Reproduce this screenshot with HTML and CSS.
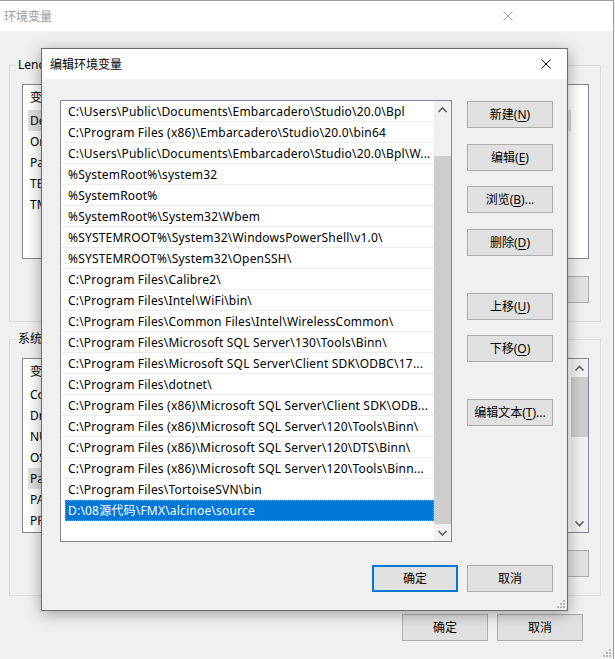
FILE: index.html
```html
<!DOCTYPE html>
<html lang="zh-CN">
<head>
<meta charset="utf-8">
<title>环境变量</title>
<link rel="stylesheet" href="styles.css">
</head>
<body>
<div class="win">
  <div class="win-title">
    <span class="win-title-text">环境变量</span>
    <svg class="win-close" width="10" height="10" viewBox="0 0 10 10"><path d="M0.5 0.5 L9.5 9.5 M9.5 0.5 L0.5 9.5" stroke="#9a9a9a" stroke-width="1" fill="none"/></svg>
  </div>
  <div class="win-body">
    <div class="group">
      <span class="group-label">Lenovo 的用户变量(<u>U</u>)</span>
      <div class="bg-list">
        <div class="bg-rows">
          <div class="bg-head">变量</div>
          <div class="bg-row hl">DevEco Studio</div>
          <div class="bg-row">OneDrive</div>
          <div class="bg-row">Path</div>
          <div class="bg-row">TEMP</div>
          <div class="bg-row">TMP</div>
        </div>
      </div>
      <div class="bg-btns">
        <button class="btn">新建(<u>N</u>)...</button>
        <button class="btn">编辑(<u>E</u>)...</button>
        <button class="btn">删除(<u>D</u>)</button>
      </div>
    </div>
    <div class="group">
      <span class="group-label">系统变量(<u>S</u>)</span>
      <div class="bg-list">
        <div class="bg-rows">
          <div class="bg-head">变量</div>
          <div class="bg-row">ComSpec</div>
          <div class="bg-row">DriverData</div>
          <div class="bg-row">NUMBER_OF_PROCESSORS</div>
          <div class="bg-row">OS</div>
          <div class="bg-row hl">Path</div>
          <div class="bg-row">PATHEXT</div>
          <div class="bg-row">PROCESSOR_ARCHITECTURE</div>
        </div>
        <div class="sbar bg-sbar">
          <svg class="arrow" width="17" height="17" viewBox="0 0 17 17"><polyline points="4.5,10.5 8.5,6.5 12.5,10.5" stroke="#606060" stroke-width="1.6" fill="none"/></svg>
          <div class="thumb bg-thumb"></div>
          <div class="track"></div>
          <svg class="arrow" width="17" height="17" viewBox="0 0 17 17"><polyline points="4.5,6.5 8.5,10.5 12.5,6.5" stroke="#606060" stroke-width="1.6" fill="none"/></svg>
        </div>
      </div>
      <div class="bg-btns">
        <button class="btn">新建(<u>W</u>)...</button>
        <button class="btn">编辑(<u>I</u>)...</button>
        <button class="btn">删除(<u>L</u>)</button>
      </div>
    </div>
    <div class="win-foot">
      <button class="btn">确定</button>
      <button class="btn">取消</button>
    </div>
  </div>
  <svg class="grip win-grip" width="8" height="8" viewBox="0 0 8 8"><rect x="6" y="0" width="2" height="2"/><rect x="6" y="3" width="2" height="2"/><rect x="3" y="3" width="2" height="2"/><rect x="6" y="6" width="2" height="2"/><rect x="3" y="6" width="2" height="2"/><rect x="0" y="6" width="2" height="2"/></svg>
</div>

<div class="dlg">
  <div class="dlg-title">
    <span class="dlg-title-text">编辑环境变量</span>
    <svg class="dlg-close" width="10" height="10" viewBox="0 0 10 10"><path d="M0.5 0.5 L9.5 9.5 M9.5 0.5 L0.5 9.5" stroke="#000" stroke-width="1" fill="none"/></svg>
  </div>
  <div class="dlg-body">
    <div class="path-list">
      <div class="rows">
        <div class="row">C:\Users\Public\Documents\Embarcadero\Studio\20.0\Bpl</div>
        <div class="row">C:\Program Files (x86)\Embarcadero\Studio\20.0\bin64</div>
        <div class="row">C:\Users\Public\Documents\Embarcadero\Studio\20.0\Bpl\W...</div>
        <div class="row">%SystemRoot%\system32</div>
        <div class="row">%SystemRoot%</div>
        <div class="row">%SystemRoot%\System32\Wbem</div>
        <div class="row">%SYSTEMROOT%\System32\WindowsPowerShell\v1.0\</div>
        <div class="row">%SYSTEMROOT%\System32\OpenSSH\</div>
        <div class="row">C:\Program Files\Calibre2\</div>
        <div class="row">C:\Program Files\Intel\WiFi\bin\</div>
        <div class="row">C:\Program Files\Common Files\Intel\WirelessCommon\</div>
        <div class="row">C:\Program Files\Microsoft SQL Server\130\Tools\Binn\</div>
        <div class="row">C:\Program Files\Microsoft SQL Server\Client SDK\ODBC\17...</div>
        <div class="row">C:\Program Files\dotnet\</div>
        <div class="row">C:\Program Files (x86)\Microsoft SQL Server\Client SDK\ODB...</div>
        <div class="row">C:\Program Files (x86)\Microsoft SQL Server\120\Tools\Binn\</div>
        <div class="row">C:\Program Files (x86)\Microsoft SQL Server\120\DTS\Binn\</div>
        <div class="row">C:\Program Files (x86)\Microsoft SQL Server\120\Tools\Binn...</div>
        <div class="row">C:\Program Files\TortoiseSVN\bin</div>
        <div class="row sel">D:\08源代码\FMX\alcinoe\source</div>
      </div>
      <div class="sbar">
        <svg class="arrow" width="17" height="17" viewBox="0 0 17 17"><polyline points="4.5,11 8.5,7 12.5,11" stroke="#606060" stroke-width="1.6" fill="none"/></svg>
        <div class="track dlg-track-top"></div>
        <div class="thumb dlg-thumb"></div>
        <svg class="arrow" width="17" height="17" viewBox="0 0 17 17"><polyline points="4.5,7 8.5,11 12.5,7" stroke="#606060" stroke-width="1.6" fill="none"/></svg>
      </div>
    </div>
    <div class="side">
      <button class="btn">新建(<u>N</u>)</button>
      <button class="btn g16">编辑(<u>E</u>)</button>
      <button class="btn g15">浏览(<u>B</u>)...</button>
      <button class="btn g16">删除(<u>D</u>)</button>
      <button class="btn g37">上移(<u>U</u>)</button>
      <button class="btn g15">下移(<u>O</u>)</button>
      <button class="btn g37">编辑文本(<u>T</u>)...</button>
    </div>
  </div>
  <div class="dlg-foot">
    <button class="btn default">确定</button>
    <button class="btn">取消</button>
  </div>
  <svg class="grip dlg-grip" width="8" height="8" viewBox="0 0 8 8"><rect x="6" y="0" width="2" height="2"/><rect x="6" y="3" width="2" height="2"/><rect x="3" y="3" width="2" height="2"/><rect x="6" y="6" width="2" height="2"/><rect x="3" y="6" width="2" height="2"/><rect x="0" y="6" width="2" height="2"/></svg>
</div>
</body>
</html>
```

FILE: styles.css
```css
html, body {
  margin: 0;
  padding: 0;
}
body {
  width: 615px;
  height: 659px;
  overflow: hidden;
  position: relative;
  background: #f0f0f0;
  font-family: "Noto Sans", "Noto Sans CJK SC", sans-serif;
  font-size: 12px;
  color: #000;
}
u { text-decoration: underline; text-underline-offset: 2px; }

/* ---------- background window ---------- */
.win {
  position: absolute;
  left: 0;
  top: 0;
  width: 614px;
  height: 659px;
  box-sizing: border-box;
  border-top: 1px solid #a0a0a0;
  border-right: 1px solid #a0a0a0;
  background: #f0f0f0;
}
.win-title {
  height: 30px;
  background: #fff;
  display: flex;
  align-items: center;
  padding-left: 4px;
  color: #9a9a9a;
}
.win-close {
  margin-left: auto;
  margin-right: 100px;
}
.win-body {
  padding: 34px 12px 0 9px;
}
.group {
  position: relative;
  width: 592px;
  height: 257px;
  box-sizing: border-box;
  border: 1px solid #dcdcdc;
  padding: 18px 11px 0 12px;
}
.group + .group { margin-top: 17px; }
.group-label {
  position: absolute;
  left: 6px;
  top: -9px;
  padding: 0 2px;
  background: #f0f0f0;
  line-height: 16px;
}
.bg-list {
  height: 175px;
  box-sizing: border-box;
  border: 1px solid #828790;
  background: #fff;
  display: flex;
}
.bg-rows { flex: 1; }
.bg-head {
  height: 25px;
  line-height: 25px;
  padding-left: 7px;
}
.bg-row {
  height: 21px;
  line-height: 21px;
  margin-left: 5px;
  padding-left: 2px;
  white-space: nowrap;
}
.bg-row.hl { background: #e0e0e0; margin-right: 17px; }
.bg-btns {
  display: flex;
  justify-content: flex-end;
  gap: 9px;
  margin-top: 17px;
}
.win-foot {
  display: flex;
  justify-content: flex-end;
  gap: 9px;
  margin-top: 18px;
  padding-right: 18px;
}

.btn {
  width: 86px;
  height: 27px;
  box-sizing: border-box;
  border: 1px solid #adadad;
  background: #e1e1e1;
  font: inherit;
  color: #000;
  padding: 0;
  margin: 0;
  text-align: center;
  line-height: 25px;
}
.btn.default {
  border: 2px solid #0078d7;
  line-height: 23px;
}

/* scrollbars */
.sbar {
  width: 17px;
  background: #f0f0f0;
  display: flex;
  flex-direction: column;
  flex: none;
}
.arrow { display: block; flex: none; }
.thumb { background: #cdcdcd; flex: none; }
.track { flex: 1; }
.bg-sbar .arrow:first-child { margin-top: 1px; }
.bg-thumb { height: 60px; }
.dlg-track-top { flex: none; height: 38px; }
.dlg-thumb { flex: 1; }

.grip { position: absolute; fill: #b8b8b8; }
.win-grip { right: 2px; bottom: 2px; }
.dlg-grip { right: 2px; bottom: 2px; }

/* ---------- dialog ---------- */
.dlg {
  position: absolute;
  left: 41px;
  top: 48px;
  width: 527px;
  height: 563px;
  box-sizing: border-box;
  border: 1px solid #6d6d6d;
  background: #f0f0f0;
  box-shadow: 0 3px 14px rgba(0, 0, 0, 0.35);
}
.dlg-title {
  height: 30px;
  background: #fff;
  display: flex;
  align-items: center;
  padding-left: 8px;
}
.dlg-close {
  margin-left: auto;
  margin-right: 16px;
}
.dlg-body {
  display: flex;
  align-items: flex-start;
  padding: 21px 0 0 18px;
}
.path-list {
  width: 392px;
  height: 442px;
  box-sizing: border-box;
  border: 1px solid #828790;
  background: #fff;
  display: flex;
}
.rows {
  flex: 1;
  padding-left: 1px;
  min-width: 0;
}
.row {
  height: 21px;
  line-height: 22px;
  box-sizing: border-box;
  border-bottom: 1px solid #ececec;
  padding-left: 6px;
  white-space: nowrap;
  overflow: hidden;
  letter-spacing: 0.2px;
}
.row.sel {
  margin-left: 3px;
  padding-left: 3px;
  background: #0078d7;
  color: #fff;
  border-bottom: none;
  line-height: 22px;
  outline: 1px dotted #e08a3a;
  outline-offset: -1px;
}
.side {
  display: flex;
  flex-direction: column;
  margin-left: 15px;
  padding-top: 1px;
}
.side .g15 { margin-top: 15px; }
.side .g16 { margin-top: 16px; }
.side .g37 { margin-top: 37px; }
.dlg-foot {
  display: flex;
  justify-content: flex-end;
  gap: 9px;
  margin-top: 23px;
  padding-right: 14px;
}
```
